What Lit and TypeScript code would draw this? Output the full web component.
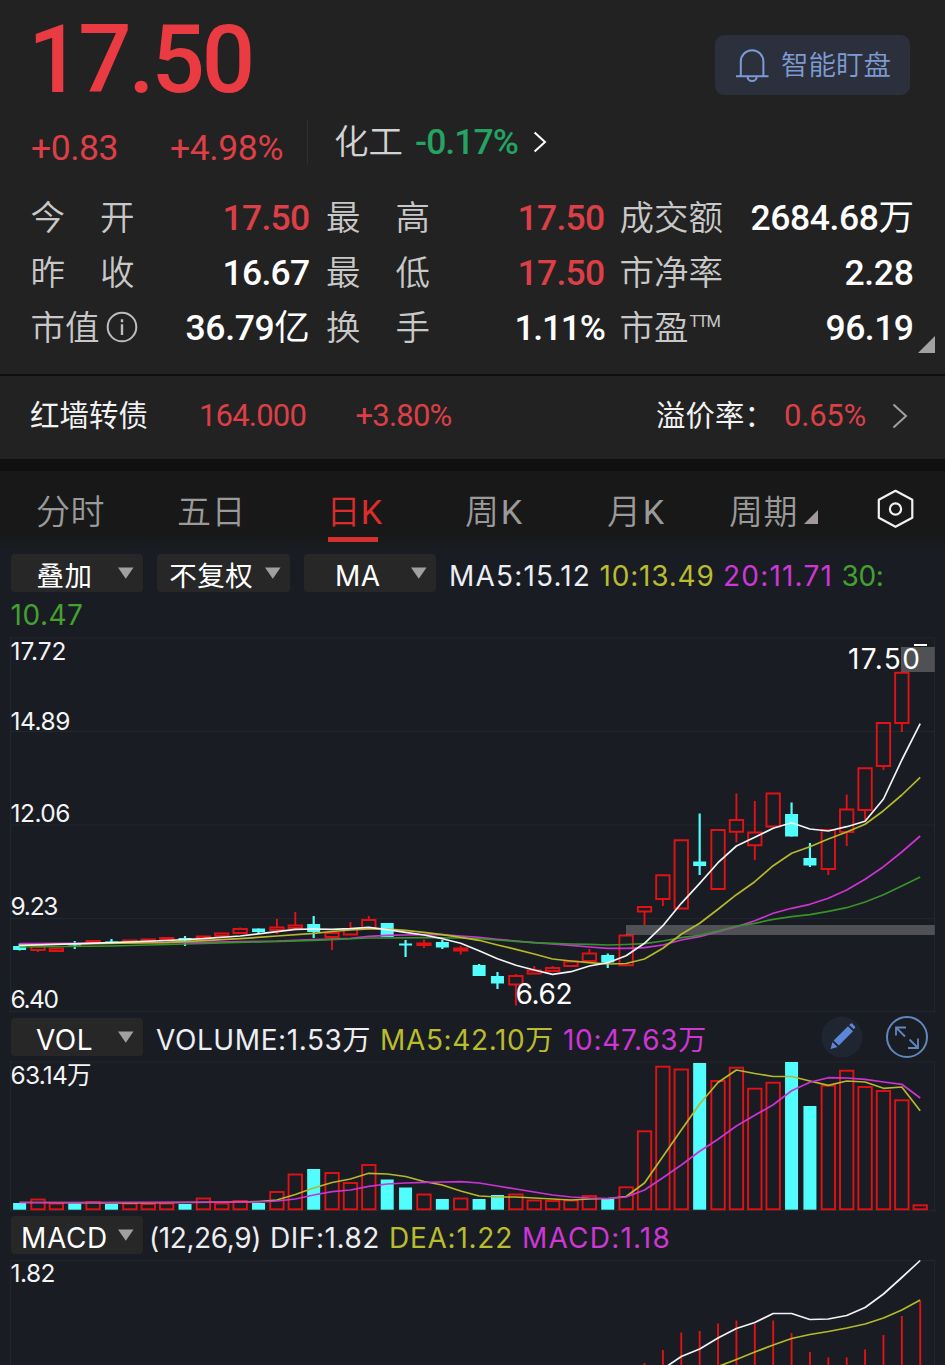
import { LitElement, html, css, svg } from "lit";
import { customElement, property } from "lit/decorators.js";

/** Single-line text whose tracking is adjusted so that it fills a given width. */
@customElement("fit-text")
export class FitText extends LitElement {
  @property({ type: Number }) w = 0;

  static styles = css`
    :host { display: inline-block; white-space: nowrap; }
    .run { display: inline-block; }
  `;

  updated() {
    const run = this.renderRoot.querySelector(".run") as HTMLElement;
    run.style.letterSpacing = "0px";
    const count = (this.textContent ?? "").trim().length;
    const natural = run.getBoundingClientRect().width;
    run.style.letterSpacing = `${(this.w - natural) / count}px`;
    this.style.width = `${this.w}px`;
  }

  render() {
    return html`<span class="run"><slot></slot></span>`;
  }
}

type Candle = [kind: "u" | "d", high: number, top: number, bottom: number, low: number];

const X0 = 19.6;
const STEP = 18.38;
const cx = (i: number) => X0 + STEP * i;

const CANDLES: Candle[] = [
  ["d", 943.5, 946, 950, 950.5], ["u", 946, 946.5, 950, 952], ["u", 948, 948.5, 951, 951],
  ["d", 941, 944, 945.5, 949], ["u", 940, 941, 943, 943], ["d", 939, 941.5, 943, 943],
  ["u", 940, 940.5, 942, 942], ["u", 939, 939.5, 941.5, 941.5], ["u", 937.5, 938, 940, 940],
  ["d", 936, 938, 940.5, 946], ["u", 936, 936.5, 938.5, 938.5], ["u", 933, 933.5, 936, 936],
  ["u", 927.5, 929, 933, 933.5], ["d", 928.5, 928.5, 932, 934], ["u", 919, 927.5, 930, 934],
  ["u", 912, 925.5, 928, 930], ["d", 916, 924, 932, 938], ["u", 932, 933, 937, 950],
  ["u", 922, 929, 934.5, 935], ["u", 916, 920, 928.5, 929], ["d", 923, 923, 937, 937],
  ["d", 940, 943.5, 945.5, 957], ["u", 939.5, 943.5, 945, 948], ["d", 940, 942, 947.5, 949],
  ["u", 946, 948.5, 950.5, 954.5], ["d", 964, 965, 976, 976], ["d", 972, 976, 983.5, 989],
  ["u", 974, 976, 984.5, 1005.5], ["u", 966, 970.5, 973.5, 974], ["u", 966, 968, 971, 971.5],
  ["u", 961, 961.5, 966, 966], ["u", 949, 953.5, 961, 961], ["d", 953.5, 955, 962.5, 968],
  ["u", 934, 935.5, 965.2, 965.2], ["u", 906, 907, 911.5, 925], ["u", 875, 875.3, 899, 906],
  ["u", 840, 840.3, 908.5, 909], ["d", 813.5, 861.5, 866, 875], ["u", 830, 830, 889, 889],
  ["u", 793.5, 820, 831.7, 842.5], ["u", 801, 832.5, 845.3, 860], ["u", 793, 793.5, 826.5, 827],
  ["d", 802.5, 814, 836.5, 836.5], ["d", 843, 858, 865.5, 867], ["u", 830, 830, 869, 875],
  ["u", 794.5, 809.5, 832, 846], ["u", 768, 768.3, 810, 821], ["u", 723, 723, 766, 770],
  ["u", 672, 672.7, 723, 732],
];

const MA: Record<string, (number | [number, number])[]> = {
  m: [[0, 943.7], [5, 943], [10, 942.3], [14, 941], [16, 939.5], [17, 939], [18, 938.3], 936.3, 935.3, 935, 934.7, 934.7, 936, 937.3, 939.3, 941, 942.7, 944, 945.3, 947, 948.3, 948.3, 947.7, 945, 940, 936.7, 931.7, 926.7, 920.7, 913.3, 908.3, 904.3, 898.3, 890, 879.3, 866.7, 852, 836],
  g: [[0, 947], [5, 946], [10, 943.5], [16, 940.3], [19, 938], [20, 938], [22, 937.7], [24, 938], 938.7, 940, 941.3, 942.7, 943.3, 944, 944.3, 945, 944.5, 943.7, 941, 937.7, 935.3, 931, 926, 923.3, 919.3, 916.7, 914.7, 911.3, 907.7, 902, 894.7, 886, 877],
  y: [[0, 945], [8, 942.3], [10, 940.7], [12, 938.7], [14, 936], [16, 933.3], [17, 931.5], 930, 929, 929, 930.3, 932.3, 934.7, 937.3, 940.3, 945, 949.3, 954, 959, 961, 962.7, 964, 963.5, 959, 948.3, 934.3, 923.3, 909.3, 894.7, 881.7, 865.7, 853.3, 846.7, 839, 832, 824.3, 810.7, 795, 777.3],
  w: [[0, 945.5], [5, 942.7], [8, 940.5], [10, 938.7], [12, 936], [14, 931.7], 929.3, 929, 929.3, 928.7, 927.3, 929.7, 932.3, 935, 938.7, 943.3, 950.7, 958.7, 965.3, 970, 974.3, 971.7, 966, 962.7, 955.7, 943.3, 925.7, 903.3, 883.3, 862.7, 846, 837.3, 828.3, 822.7, 829, 831, 826.7, 821.3, 799, 760, 723.7],
};

const VOLUMES: ["u" | "d", number][] = [
  ["d", 1203], ["u", 1199.5], ["u", 1203.5], ["d", 1203.5], ["u", 1202], ["d", 1204], ["u", 1203.5], ["u", 1204],
  ["u", 1203.5], ["d", 1204], ["u", 1198.5], ["u", 1203.5], ["u", 1201], ["d", 1203], ["u", 1192], ["u", 1174.5],
  ["d", 1169], ["u", 1173], ["u", 1183], ["u", 1165], ["d", 1179.5], ["d", 1187.5], ["u", 1194.5], ["d", 1199],
  ["u", 1198.5], ["d", 1199], ["d", 1195], ["u", 1194.5], ["u", 1200.5], ["u", 1201], ["u", 1200.5], ["u", 1196],
  ["d", 1199], ["u", 1187.3], ["u", 1131.3], ["u", 1066.7], ["u", 1069.5], ["d", 1063], ["u", 1081], ["u", 1067.7],
  ["u", 1088.7], ["u", 1082.7], ["d", 1062], ["d", 1106], ["u", 1085.7], ["u", 1070.7], ["u", 1087], ["u", 1091],
  ["u", 1100.3], ["u", 1205.3],
];

const VMA: Record<string, (number | [number, number])[]> = {
  y: [[0, 1202.5], [6, 1203], [12, 1202], [13, 1201.5], 1200, 1194.5, 1188, 1182.5, 1179, 1173.3, 1174, 1176.5, 1181.5, 1185, 1191, 1196, 1197, 1197, 1198, 1199, 1200, 1199, 1198.5, 1196.5, 1183, 1156.5, 1130, 1104, 1082.5, 1070, 1073.5, 1076.5, 1076.5, 1081, 1085.3, 1081, 1082, 1088.3, 1087, 1110.7],
  m: [[0, 1202.5], [13, 1202], 1201, 1199, 1195, 1191.7, 1190, 1186.3, 1184, 1183, 1182.3, 1182, 1181.7, 1183, 1186, 1189, 1192, 1195, 1197, 1198, 1198.5, 1197, 1190, 1177.7, 1165, 1151.3, 1139.3, 1126, 1115.3, 1104.7, 1090.7, 1082.3, 1077.7, 1078, 1079.3, 1082, 1084.3, 1098],
};

const HIST: [number, number][] = [
  [34, 1363], [35, 1350], [36, 1332.5], [37, 1331], [38, 1323.5], [39, 1320.5], [40, 1324], [41, 1320.5],
  [42, 1333], [43, 1352], [44, 1357.5], [45, 1357.5], [46, 1349.5], [47, 1335], [48, 1316], [49, 1301],
];

const DIF: Record<string, (number | [number, number])[]> = {
  w: [[35, 1369], 1356.5, 1349, 1338, 1328.5, 1322.5, 1313.5, 1313.5, 1319.5, 1319, 1315.5, 1307.5, 1294, 1277.5, 1260.5],
  y: [[38, 1366.5], 1359.5, 1352, 1345, 1338.5, 1334.5, 1331.5, 1328, 1324, 1318, 1310, 1300],
};

/** A bare number continues one step after the previous point. */
function points(data: (number | [number, number])[]): string {
  let i = -1;
  return data
    .map((p) => {
      const y = Array.isArray(p) ? p[1] : p;
      i = Array.isArray(p) ? p[0] : i + 1;
      return `${cx(i).toFixed(1)},${y}`;
    })
    .join(" ");
}

const lines = (set: Record<string, (number | [number, number])[]>) =>
  Object.entries(set).map(([k, d]) => svg`<polyline class="ln ${k}" points=${points(d)} />`);

const grid = (ys: number[], y1: number, y2: number) => svg`
  ${ys.map((y) => svg`<line class="grid" x1="10.5" x2="934.5" y1=${y} y2=${y} />`)}
  <line class="grid" x1="10.5" x2="10.5" y1=${y1} y2=${y2} />
  <line class="grid" x1="934.5" x2="934.5" y1=${y1} y2=${y2} />`;

@customElement("app-root")
export class AppRoot extends LitElement {
  static styles = css`
    :host {
      display: block;
      width: 945px;
      height: 1365px;
      overflow: hidden;
      background: #191c23;
      color: #fff;
      font-family: Roboto, "Noto Sans CJK SC", sans-serif;
    }
    svg { display: block; flex: none; }
    .red { color: #dc3f46; }
    .green { color: #24a363; }

    .quote {
      position: relative;
      box-sizing: border-box;
      height: 374px;
      background: #222;
    }
    .top { display: flex; justify-content: space-between; align-items: flex-start; height: 121px; padding: 0 35px 0 28px; }
    .price { font-size: 94px; line-height: 121px; font-weight: 500; color: #e93b41; }
    .watch {
      box-sizing: border-box;
      display: flex;
      align-items: center;
      gap: 12px;
      width: 195px;
      height: 60px;
      margin-top: 35px;
      padding-left: 20px;
      border-radius: 9px;
      background: #2b303c;
      color: #7d9bd2;
      font-size: 27.5px;
      font-weight: 350;
      line-height: 63px;
    }
    .change { display: flex; align-items: flex-start; height: 69px; padding-left: 31px; font-size: 35.5px; line-height: 55px; }
    .pct { margin-left: 52px; }
    .industry {
      display: flex;
      align-items: center;
      margin-left: 24px;
      line-height: 42px;
      height: 42px;
    }
    .bar { width: 1px; height: 44px; margin: 0 26px 0 0; background: #303030; }
    .trade { font-size: 34.5px; font-weight: 350; color: #d2d2d2; line-height: 44px; }
    .trade-pct { margin: 0 15px 0 12px; font-weight: 500; }
    .stats { display: grid; grid-template-columns: 295.5px 293.5px 294px; grid-auto-rows: 55px; padding-left: 30.5px; }
    .cell { display: flex; justify-content: space-between; line-height: 57px; padding-right: 16.5px; }
    .cell:nth-child(3n) { padding-right: 0; }
    .cell:nth-child(3n + 2) { padding-right: 15px; }
    .label { display: flex; justify-content: space-between; width: 104px; font-size: 34.5px; font-weight: 350; color: #c8c8c8; white-space: nowrap; }
    .info { align-self: center; margin: 0 -3px 2px 0; }
    .ttm { font-size: 16.5px; font-weight: 400; line-height: 44px; margin-right: 4px; }
    .value { font-size: 35.5px; font-weight: 500; }
    .unit { font-weight: 400; }
    .more { position: absolute; left: 918px; top: 336px; }

    .bond {
      box-sizing: border-box;
      display: flex;
      align-items: center;
      height: 85px;
      padding: 0 37px 3px 30px;
      border-top: 2px solid #0e0e0e;
      background: #222;
      font-size: 31px;
      line-height: 60px;
    }
    .name { font-size: 29.4px; color: #f2f2f2; }
    .b1 { margin-left: 51px; }
    .b2 { margin-left: 49.5px; }
    .premium { margin-left: auto; }
    .b3 { margin: 0 26px 0 10px; }

    .gap { height: 12px; background: #101010; }

    .tabs {
      display: grid;
      grid-template-columns: 141px 149.5px 138.5px 142px 122px 136px 1fr;
      height: 77px;
      padding-left: 36px;
      background: linear-gradient(#181818 82%, #191b20);
      font-size: 34px;
      font-weight: 350;
      line-height: 82px;
      color: #9a9a9a;
    }
    .tab { display: flex; align-items: flex-start; }
    .k-unit { font-weight: 400; }
    .tab.on { color: #dc2c2c; flex-direction: column; }
    .underline { width: 50px; height: 5px; margin: -16px 0 0 1.5px; background: #d62f2f; }
    .corner { margin: 39px 0 0 6px; }
    .gear { margin: 18px 0 0 12px; }

    .tools, .wrapped { font-family: Inter, "Noto Sans CJK SC", sans-serif; font-size: 28px; }
    .tools { display: flex; align-items: center; height: 38px; padding-left: 10.5px; line-height: 38px; }
    .tools.k { padding-top: 6px; }
    .tools.v { padding-top: 5px; padding-bottom: 4px; }
    .tools.m { padding-top: 4px; padding-bottom: 2px; }
    .pick {
      box-sizing: border-box;
      display: flex;
      align-items: center;
      justify-content: space-between;
      width: 132.5px;
      height: 38px;
      margin-right: 13px;
      padding: 0 8px 0 0;
      border-radius: 4px;
      background: #272727;
    }
    .tools.k .pick { margin-right: 14.2px; }
    .pick .cap { flex: 1; display: flex; justify-content: center; padding: 6px 0 0 1.5px; }
    .pick .cjk { padding-top: 5px; font-size: 27.5px; }
    .leg { margin-right: 9px; color: #eceef2; }
    .tools .leg { padding-top: 6px; }
    .k .leg { margin-right: 8.5px; }
    .leg.y { color: #b9bd2d; }
    .leg.m { color: #cf36d6; }
    .leg.g { color: #45a12f; }
    .leg.first { margin-left: -7px; }
    .k .first { margin-left: -1.5px; }
    .wrapped { box-sizing: border-box; height: 45px; padding: 1px 0 0 10.5px; line-height: 45px; }
    .pen { margin-left: 105px; }
    .full { margin-left: 23px; }

    .grid { stroke: #22262d; stroke-width: 1.2; }
    .axis { font: 24.5px Inter, "Noto Sans CJK SC", sans-serif; fill: #f4f4f4; }
    .tag { font: 28px Inter, sans-serif; fill: #fff; }
    .zone { fill: #9a9a9a; opacity: 0.42; }
    .u { fill: none; stroke: #e01216; stroke-width: 1.9; }
    .d { fill: #52fdfd; }
    .dw { stroke: #52fdfd; stroke-width: 2.2; }
    .ln { fill: none; stroke-width: 1.7; stroke-linejoin: round; }
    .ln.w { stroke: #f3f3f3; }
    .ln.y { stroke: #b5b92a; }
    .ln.m { stroke: #cc33d4; }
    .ln.g { stroke: #38922a; }
  `;

  private pick(text: string, w: number, cjk = false) {
    return html`<div class="pick">
      <span class="cap ${cjk ? "cjk" : ""}"><fit-text w=${w}>${text}</fit-text></span>
      <svg width="18" height="14" viewBox="0 0 18 14"><path d="M1 1.5h15.5L8.8 12.8z" fill="#a0a0a0" /></svg>
    </div>`;
  }

  private cell(label: unknown, value: string, w: number, red = false, unit = "") {
    return html`<div class="cell">
      <span class="label">${label}</span>
      <fit-text class="value ${red ? "red" : ""}" w=${w}>${value}<span class="unit">${unit}</span></fit-text>
    </div>`;
  }

  private candle([kind, hi, top, bot, lo]: Candle, i: number) {
    const x = cx(i);
    if (kind === "d") {
      return svg`<line class="dw" x1=${x} x2=${x} y1=${hi} y2=${lo} />
        <rect class="d" x=${x - 6.5} y=${top} width="13" height=${bot - top} />`;
    }
    return svg`<path class="u" d="M${x} ${hi}V${top}M${x} ${bot}V${lo}M${x - 6.7} ${top}h13.4V${bot}h-13.4z" />`;
  }

  render() {
    return html`
      <section class="quote">
        <div class="top">
          <fit-text class="price" w="224">17.50</fit-text>
          <div class="watch">
            <svg width="34" height="36" viewBox="0 0 34 36" fill="none" stroke="currentColor" stroke-width="2">
              <path d="M5.8 29.2V14.5a11.3 11.3 0 0 1 22.6 0V29.2M1 29.2h32.5M12.5 29.5a4.6 4.6 0 0 0 9.2 0" />
            </svg>
            <fit-text w="110">智能盯盘</fit-text>
          </div>
        </div>
        <div class="change">
          <fit-text class="red" w="87">+0.83</fit-text>
          <fit-text class="red pct" w="113">+4.98%</fit-text>
          <div class="industry">
            <span class="bar"></span>
            <fit-text class="trade" w="69">化工</fit-text>
            <fit-text class="green trade-pct" w="103">-0.17%</fit-text>
            <svg width="14" height="22" viewBox="0 0 14 22" fill="none" stroke="#fff" stroke-width="2"><path d="M1.6 1.5 12 11 1.6 20.5" /></svg>
          </div>
        </div>
        <div class="stats">
          ${this.cell(html`<span>今</span><span>开</span>`, "17.50", 87, true)}
          ${this.cell(html`<span>最</span><span>高</span>`, "17.50", 87, true)}
          ${this.cell("成交额", "2684.68", 163, false, "万")}
          ${this.cell(html`<span>昨</span><span>收</span>`, "16.67", 87)}
          ${this.cell(html`<span>最</span><span>低</span>`, "17.50", 87, true)}
          ${this.cell("市净率", "2.28", 69)}
          ${this.cell(html`<span>市值</span><svg class="info" width="32" height="32" viewBox="0 0 32 32"><circle cx="16" cy="16" r="14.3" fill="none" stroke="#bdbdbd" stroke-width="2" /><path d="M16 13.2V24M16 8.2v3" stroke="#bdbdbd" stroke-width="2.4" /></svg>`, "36.79", 124, false, "亿")}
          ${this.cell(html`<span>换</span><span>手</span>`, "1.11%", 90)}
          ${this.cell(html`<span>市盈</span><fit-text class="ttm" w="30">TTM</fit-text>`, "96.19", 88)}
        </div>
        <svg class="more" width="17" height="17" viewBox="0 0 17 17"><path d="M17 0v17H0z" fill="#a2a2a2" /></svg>
      </section>

      <section class="bond">
        <fit-text class="name" w="118">红墙转债</fit-text>
        <fit-text class="red b1" w="107">164.000</fit-text>
        <fit-text class="red b2" w="96">+3.80%</fit-text>
        <fit-text class="name premium" w="118">溢价率：</fit-text>
        <fit-text class="red b3" w="82">0.65%</fit-text>
        <svg width="16" height="26" viewBox="0 0 16 26" fill="none" stroke="#a0a0a0" stroke-width="2"><path d="M1.5 1.5 14 13 1.5 24.5" /></svg>
      </section>

      <div class="gap"></div>

      <nav class="tabs">
        <span class="tab"><fit-text w="69">分时</fit-text></span>
        <span class="tab"><fit-text w="69">五日</fit-text></span>
        <span class="tab on"><fit-text w="56">日<span class="k-unit">K</span></fit-text><span class="underline"></span></span>
        <span class="tab"><fit-text w="59">周<span class="k-unit">K</span></fit-text></span>
        <span class="tab"><fit-text w="59">月<span class="k-unit">K</span></fit-text></span>
        <span class="tab"><fit-text w="69">周期</fit-text><svg class="corner" width="14" height="14" viewBox="0 0 14 14"><path d="M14 0v14H0z" fill="#a29a9a" /></svg></span>
        <svg class="gear" width="38" height="40" viewBox="0 0 38 40" fill="none" stroke="#f0f0f0" stroke-width="2.2" stroke-linejoin="round">
          <path d="M18.5 1.8 35.3 10.8V28.8L18.5 37.8 1.8 28.8V10.8z" /><circle cx="18.5" cy="20" r="5.6" />
        </svg>
      </nav>

      <div class="tools k">
        ${this.pick("叠加", 56, true)}
        ${this.pick("不复权", 84, true)}
        ${this.pick("MA", 46)}
        <fit-text class="leg first" w="142">MA5:15.12</fit-text>
        <fit-text class="leg y" w="115">10:13.49</fit-text>
        <fit-text class="leg m" w="110">20:11.71</fit-text>
        <fit-text class="leg g" w="42">30:</fit-text>
      </div>
      <div class="wrapped"><fit-text class="leg g" w="73">10.47</fit-text></div>

      <svg width="945" height="376" viewBox="0 637 945 376">
        ${grid([638, 731.5, 825, 918.5, 1011.5], 638, 1013)}
        ${CANDLES.map((c, i) => this.candle(c, i))}
        <rect class="zone" x="901" y="647" width="33.7" height="25" />
        <rect class="zone" x="626" y="925" width="308.7" height="10" />
        ${lines(MA)}
        <line x1="914" x2="927" y1="645" y2="645" stroke="#fff" stroke-width="2" />
        <text class="axis" x="10.5" y="659.5" textLength="56">17.72</text>
        <text class="axis" x="10.5" y="729.5" textLength="60">14.89</text>
        <text class="axis" x="10.5" y="822.3" textLength="60">12.06</text>
        <text class="axis" x="10.5" y="915" textLength="48">9.23</text>
        <text class="axis" x="10.5" y="1007.7" textLength="48.5">6.40</text>
        <text class="tag" x="848" y="669.3" textLength="72">17.50</text>
        <text class="tag" x="515.5" y="1004" textLength="57">6.62</text>
      </svg>

      <div class="tools v">
        ${this.pick("VOL", 57)}
        <fit-text class="leg" w="215">VOLUME:1.53万</fit-text>
        <fit-text class="leg y" w="174">MA5:42.10万</fit-text>
        <fit-text class="leg m" w="144">10:47.63万</fit-text>
        <svg class="pen" width="42" height="42" viewBox="0 0 42 42">
          <circle cx="21" cy="21" r="20.5" fill="#202532" />
          <path d="M9.5 33 11.5 26 16.5 31zM12.6 24.6 27 10.2l5 5L17.9 29.6z M28.2 9l1.6-1.4q.8-.6 1.6.1l2.6 2.7q.7.8 0 1.5l-1.2 1.3z" fill="#5c86d6" />
        </svg>
        <svg class="full" width="42" height="42" viewBox="0 0 42 42" fill="none" stroke="#6187bd" stroke-width="2">
          <circle cx="21" cy="21" r="20" />
          <path d="M10 19.5V11.5h10M10.5 12 19 20.5M32 22.5V32H22M31.5 31.5 23.5 23.5" stroke-width="1.8" />
        </svg>
      </div>

      <svg width="945" height="152" viewBox="0 1060 945 152">
        ${grid([1062, 1210.5], 1062, 1212)}
        ${VOLUMES.map(([k, y], i) =>
          k === "d"
            ? svg`<rect class="d" x=${cx(i) - 6.5} y=${y} width="13" height=${1209.7 - y} />`
            : svg`<rect class="u" x=${cx(i) - 6.7} y=${y} width="13.4" height=${1209.3 - y} />`
        )}
        ${lines(VMA)}
        <text class="axis" x="10.5" y="1083.7" textLength="81">63.14万</text>
      </svg>

      <div class="tools m">
        ${this.pick("MACD", 87)}
        <fit-text class="leg first" w="112">(12,26,9)</fit-text>
        <fit-text class="leg" w="110">DIF:1.82</fit-text>
        <fit-text class="leg y" w="124">DEA:1.22</fit-text>
        <fit-text class="leg m" w="149">MACD:1.18</fit-text>
      </div>

      <svg width="945" height="109" viewBox="0 1256 945 109">
        ${grid([1260.5], 1260, 1365)}
        ${HIST.map(([i, y]) => svg`<line class="u" x1=${cx(i)} x2=${cx(i)} y1=${y} y2="1366" />`)}
        ${lines(DIF)}
        <text class="axis" x="10.5" y="1282" textLength="45">1.82</text>
      </svg>
    `;
  }
}
